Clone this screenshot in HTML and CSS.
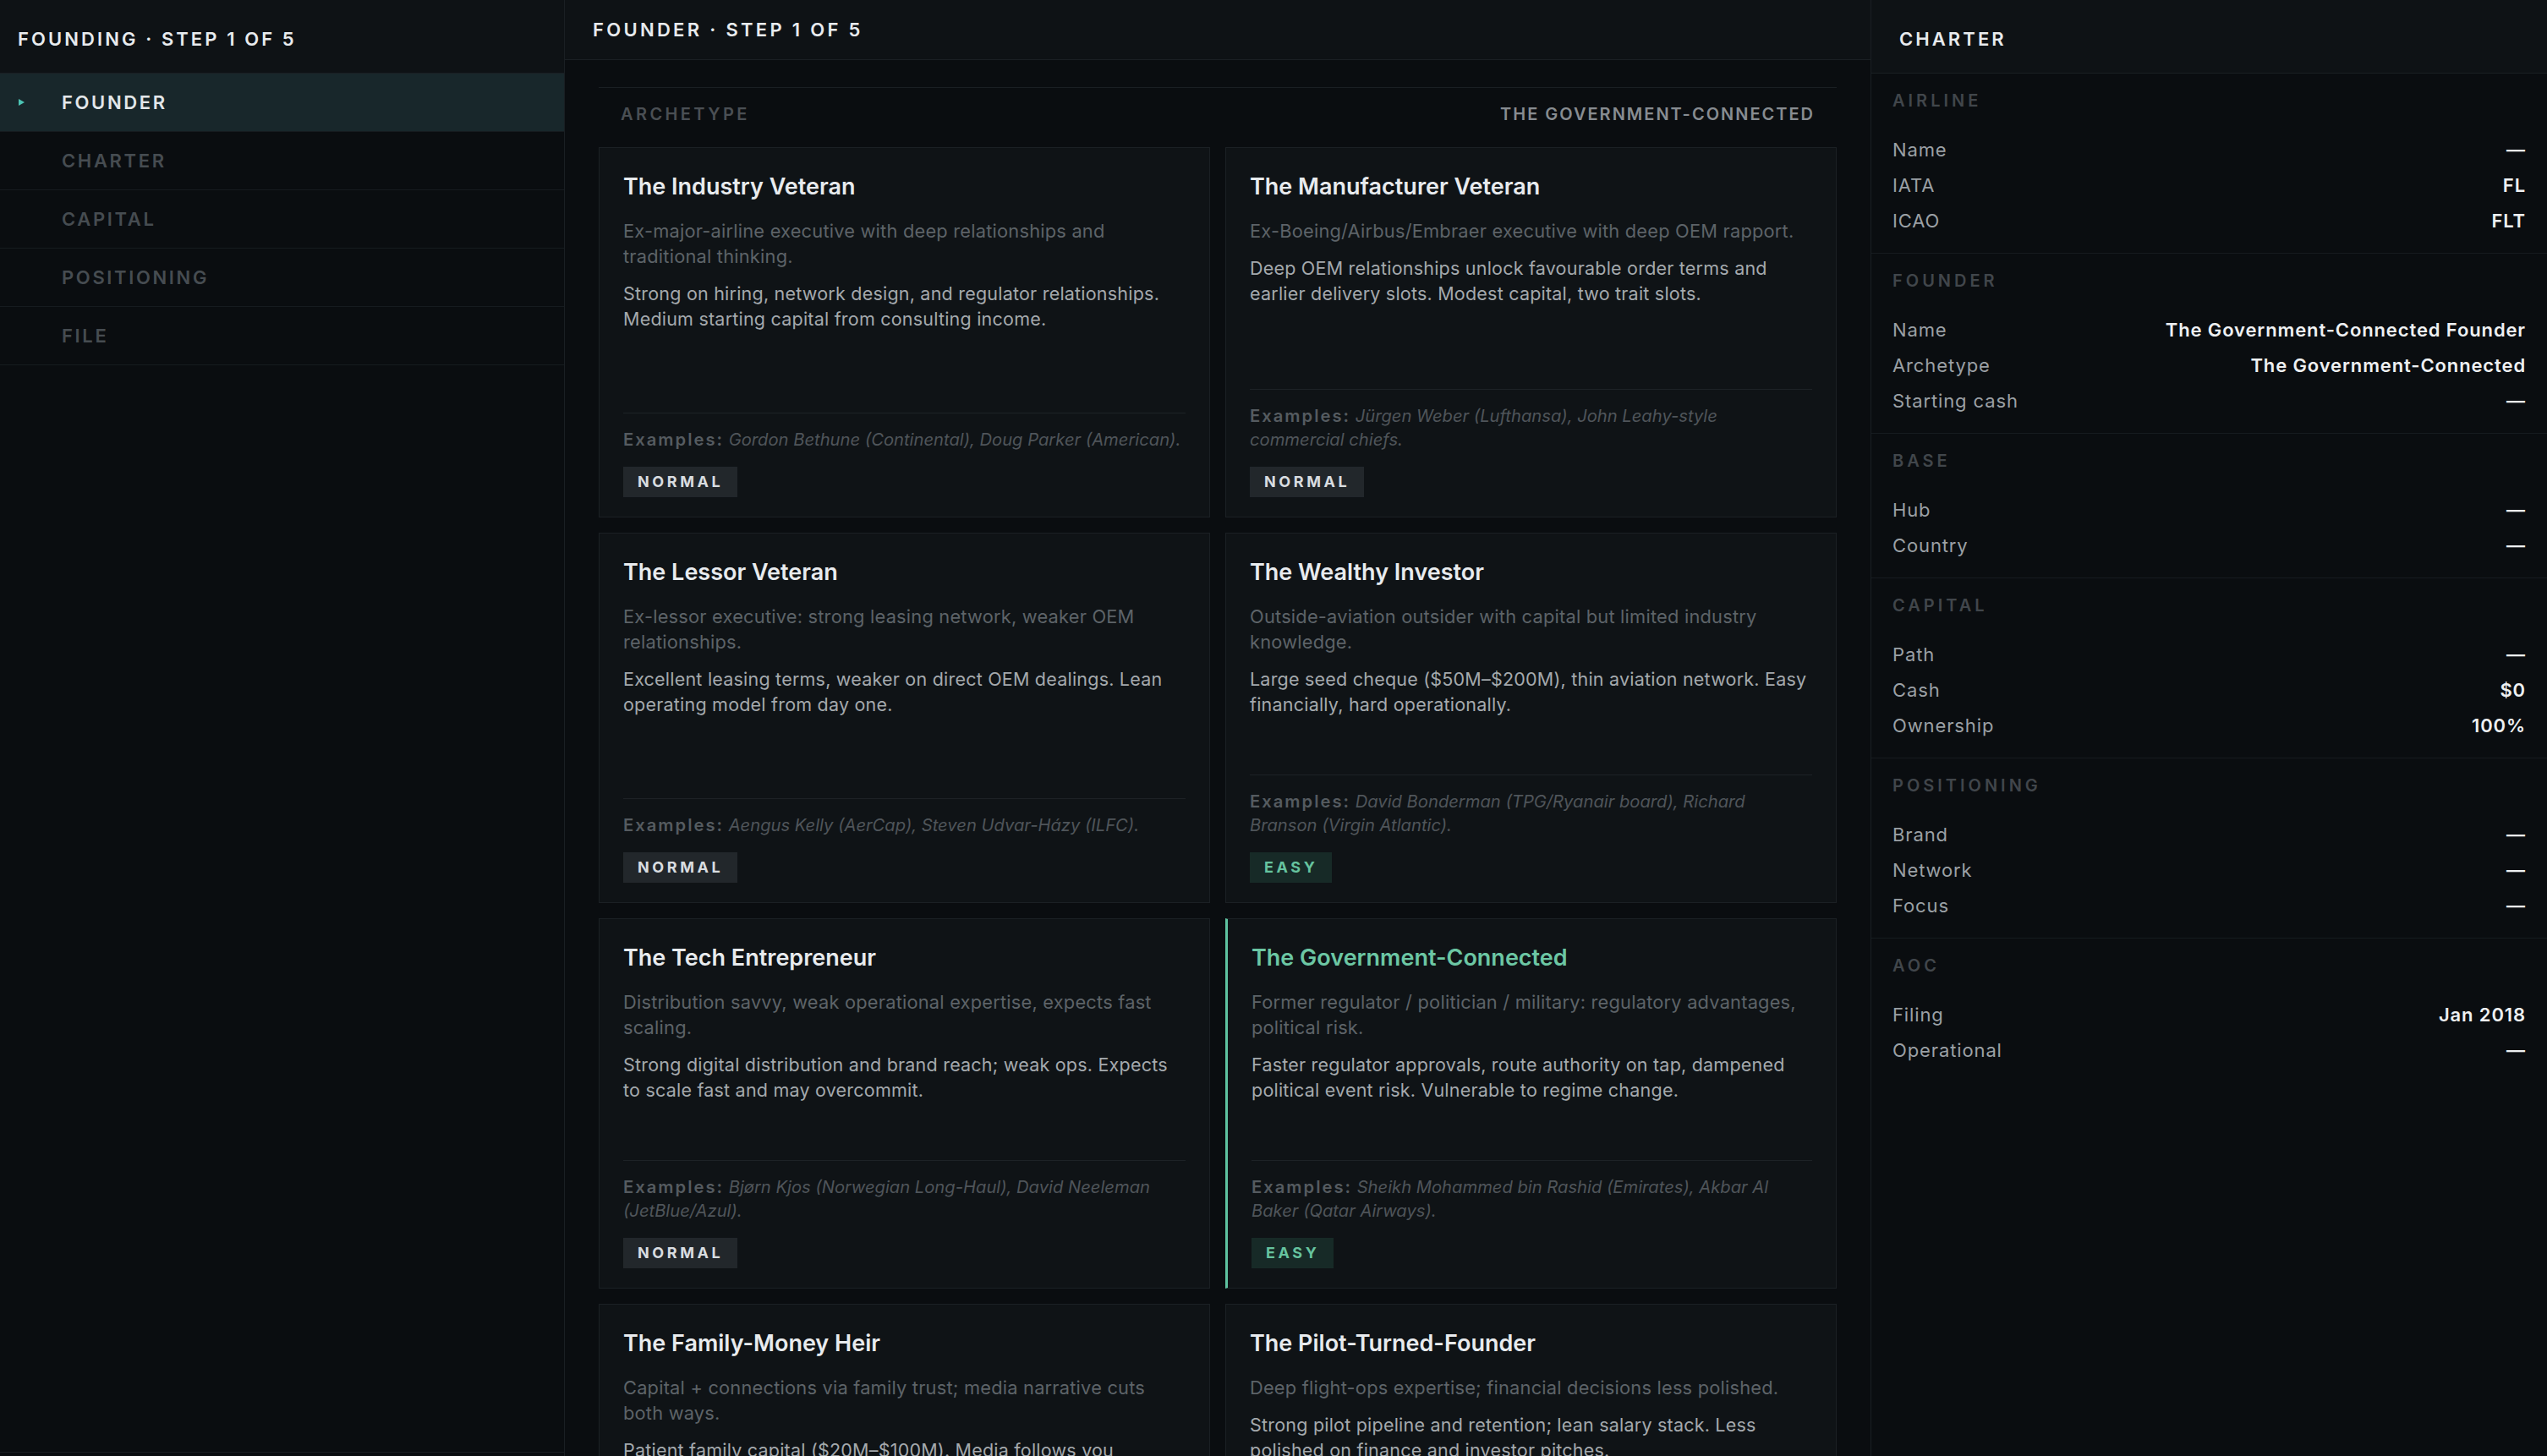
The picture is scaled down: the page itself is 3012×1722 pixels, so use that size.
FILE: index.html
```html
<!DOCTYPE html>
<html lang="en">
<head>
<meta charset="utf-8">
<title>Founding · Step 1 of 5</title>
<link rel="stylesheet" href="styles.css">
</head>
<body>
<div class="app">
  <aside class="steps">
    <div class="steps-head">FOUNDING · STEP 1 OF 5</div>
    <nav class="step-list">
      <div class="step active"><span class="caret"></span><span class="step-name">FOUNDER</span></div>
      <div class="step"><span class="caret"></span><span class="step-name">CHARTER</span></div>
      <div class="step"><span class="caret"></span><span class="step-name">CAPITAL</span></div>
      <div class="step"><span class="caret"></span><span class="step-name">POSITIONING</span></div>
      <div class="step"><span class="caret"></span><span class="step-name">FILE</span></div>
    </nav>
    <div class="steps-foot"></div>
  </aside>

  <main class="main">
    <div class="main-head">FOUNDER · STEP 1 OF 5</div>
    <div class="main-body">
      <div class="section-head">
        <span class="section-label">ARCHETYPE</span>
        <span class="section-value">THE GOVERNMENT-CONNECTED</span>
      </div>
      <div class="cards">
        <div class="card">
          <div class="card-title">The Industry Veteran</div>
          <div class="card-sub">Ex-major-airline executive with deep relationships and traditional thinking.</div>
          <div class="card-body">Strong on hiring, network design, and regulator relationships. Medium starting capital from consulting income.</div>
          <div class="card-foot">
            <div class="examples"><span class="ex-label">Examples:</span> <em>Gordon Bethune (Continental), Doug Parker (American).</em></div>
            <span class="badge">NORMAL</span>
          </div>
        </div>
        <div class="card">
          <div class="card-title">The Manufacturer Veteran</div>
          <div class="card-sub">Ex-Boeing/Airbus/Embraer executive with deep OEM rapport.</div>
          <div class="card-body">Deep OEM relationships unlock favourable order terms and earlier delivery slots. Modest capital, two trait slots.</div>
          <div class="card-foot">
            <div class="examples"><span class="ex-label">Examples:</span> <em>Jürgen Weber (Lufthansa), John Leahy-style commercial chiefs.</em></div>
            <span class="badge">NORMAL</span>
          </div>
        </div>
        <div class="card">
          <div class="card-title">The Lessor Veteran</div>
          <div class="card-sub">Ex-lessor executive: strong leasing network, weaker OEM relationships.</div>
          <div class="card-body">Excellent leasing terms, weaker on direct OEM dealings. Lean operating model from day one.</div>
          <div class="card-foot">
            <div class="examples"><span class="ex-label">Examples:</span> <em>Aengus Kelly (AerCap), Steven Udvar-Házy (ILFC).</em></div>
            <span class="badge">NORMAL</span>
          </div>
        </div>
        <div class="card">
          <div class="card-title">The Wealthy Investor</div>
          <div class="card-sub">Outside-aviation outsider with capital but limited industry knowledge.</div>
          <div class="card-body">Large seed cheque ($50M–$200M), thin aviation network. Easy financially, hard operationally.</div>
          <div class="card-foot">
            <div class="examples"><span class="ex-label">Examples:</span> <em>David Bonderman (TPG/Ryanair board), Richard Branson (Virgin Atlantic).</em></div>
            <span class="badge easy">EASY</span>
          </div>
        </div>
        <div class="card">
          <div class="card-title">The Tech Entrepreneur</div>
          <div class="card-sub">Distribution savvy, weak operational expertise, expects fast scaling.</div>
          <div class="card-body">Strong digital distribution and brand reach; weak ops. Expects to scale fast and may overcommit.</div>
          <div class="card-foot">
            <div class="examples"><span class="ex-label">Examples:</span> <em>Bjørn Kjos (Norwegian Long-Haul), David Neeleman (JetBlue/Azul).</em></div>
            <span class="badge">NORMAL</span>
          </div>
        </div>
        <div class="card selected">
          <div class="card-title">The Government-Connected</div>
          <div class="card-sub">Former regulator / politician / military: regulatory advantages, political risk.</div>
          <div class="card-body">Faster regulator approvals, route authority on tap, dampened political event risk. Vulnerable to regime change.</div>
          <div class="card-foot">
            <div class="examples"><span class="ex-label">Examples:</span> <em>Sheikh Mohammed bin Rashid (Emirates), Akbar Al Baker (Qatar Airways).</em></div>
            <span class="badge easy">EASY</span>
          </div>
        </div>
        <div class="card">
          <div class="card-title">The Family-Money Heir</div>
          <div class="card-sub">Capital + connections via family trust; media narrative cuts both ways.</div>
          <div class="card-body">Patient family capital ($20M–$100M). Media follows you everywhere; scandals hit the brand harder.</div>
          <div class="card-foot">
            <div class="examples"><span class="ex-label">Examples:</span> <em>Family-office founders and heirs.</em></div>
            <span class="badge">NORMAL</span>
          </div>
        </div>
        <div class="card">
          <div class="card-title">The Pilot-Turned-Founder</div>
          <div class="card-sub">Deep flight-ops expertise; financial decisions less polished.</div>
          <div class="card-body">Strong pilot pipeline and retention; lean salary stack. Less polished on finance and investor pitches.</div>
          <div class="card-foot">
            <div class="examples"><span class="ex-label">Examples:</span> <em>Captain-founders of regional start-ups.</em></div>
            <span class="badge">NORMAL</span>
          </div>
        </div>
      </div>
    </div>
  </main>

  <aside class="charter">
    <div class="charter-head">CHARTER</div>
    <section class="csec">
      <div class="csec-label">AIRLINE</div>
      <div class="crow"><span>Name</span><b>—</b></div>
      <div class="crow"><span>IATA</span><b>FL</b></div>
      <div class="crow"><span>ICAO</span><b>FLT</b></div>
    </section>
    <section class="csec">
      <div class="csec-label">FOUNDER</div>
      <div class="crow"><span>Name</span><b>The Government-Connected Founder</b></div>
      <div class="crow"><span>Archetype</span><b>The Government-Connected</b></div>
      <div class="crow"><span>Starting cash</span><b>—</b></div>
    </section>
    <section class="csec">
      <div class="csec-label">BASE</div>
      <div class="crow"><span>Hub</span><b>—</b></div>
      <div class="crow"><span>Country</span><b>—</b></div>
    </section>
    <section class="csec">
      <div class="csec-label">CAPITAL</div>
      <div class="crow"><span>Path</span><b>—</b></div>
      <div class="crow"><span>Cash</span><b>$0</b></div>
      <div class="crow"><span>Ownership</span><b>100%</b></div>
    </section>
    <section class="csec">
      <div class="csec-label">POSITIONING</div>
      <div class="crow"><span>Brand</span><b>—</b></div>
      <div class="crow"><span>Network</span><b>—</b></div>
      <div class="crow"><span>Focus</span><b>—</b></div>
    </section>
    <section class="csec last">
      <div class="csec-label">AOC</div>
      <div class="crow"><span>Filing</span><b>Jan 2018</b></div>
      <div class="crow"><span>Operational</span><b>—</b></div>
    </section>
  </aside>
</div>
</body>
</html>
```
FILE: styles.css
```css
* { box-sizing: border-box; }
html, body { margin: 0; padding: 0; }
body {
  background: #0a0d10;
  color: #e8ebee;
  font-family: Inter, "Noto Sans", "Liberation Sans", sans-serif;
  height: 1722px;
  overflow: hidden;
}
.app {
  display: grid;
  grid-template-columns: 668px 1fr 800px;
  height: 100vh;
}

/* left steps */
.steps {
  display: flex;
  flex-direction: column;
  background: #0a0d10;
  border-right: 1px solid #1a1f23;
  min-height: 0;
}
.steps-head {
  height: 87px;
  flex: none;
  display: flex;
  align-items: center;
  padding: 6px 21px 0;
  background: #0e1215;
  border-bottom: 1px solid #1a1f23;
  font-size: 22px;
  font-weight: 600;
  letter-spacing: 0.14em;
  color: #e8ebee;
}
.step-list { display: flex; flex-direction: column; }
.step {
  height: 69px;
  display: flex;
  align-items: center;
  border-bottom: 1px solid #161b1f;
  font-size: 22px;
  font-weight: 600;
  letter-spacing: 0.12em;
  color: #464c51;
}
.step .caret {
  flex: none;
  width: 73px;
  padding-left: 22px;
  display: flex;
  align-items: center;
}
.step.active { background: #18272b; color: #e3e7ea; }
.step.active .caret::before {
  content: "";
  display: block;
  width: 0;
  height: 0;
  border-top: 4px solid transparent;
  border-bottom: 4px solid transparent;
  border-left: 7px solid #4cc4b4;
}
.steps-foot {
  margin-top: auto;
  height: 5px;
  border-top: 1px solid #1a1f23;
}

/* main */
.main {
  display: flex;
  flex-direction: column;
  min-height: 0;
  overflow: hidden;
  background: #0a0d10;
}
.main-head {
  height: 71px;
  flex: none;
  display: flex;
  align-items: center;
  padding: 0 33px;
  background: #0e1215;
  border-bottom: 1px solid #1a1f23;
  font-size: 22px;
  font-weight: 600;
  letter-spacing: 0.15em;
  color: #e8ebee;
}
.main-body {
  padding: 32px 40px;
  flex: 1;
  min-height: 0;
  overflow: hidden;
}
.section-head {
  display: flex;
  justify-content: space-between;
  border-top: 1px solid #1a1f23;
  padding: 19px 26px 27px;
  font-size: 20px;
  line-height: 24px;
  font-weight: 600;
}
.section-label { color: #4a4f54; letter-spacing: 0.17em; }
.section-value { color: #878c91; letter-spacing: 0.1em; }

.cards {
  display: grid;
  grid-template-columns: 1fr 1fr;
  gap: 18px;
}
.card {
  min-height: 438px;
  display: flex;
  flex-direction: column;
  background: #0f1316;
  border: 1px solid #1b2024;
  padding: 31px 28px 23px;
}
.card.selected { border-left: 3px solid #5ec2a0; }
.card-title {
  font-size: 27px;
  line-height: 30px;
  font-weight: 600;
  color: #e8ebee;
  margin-bottom: 22px;
}
.card.selected .card-title { color: #6cc7a4; }
.card-sub {
  font-size: 21.8px;
  line-height: 30px;
  letter-spacing: 0.01em;
  color: #5d6368;
  margin-bottom: 14px;
}
.card-body {
  font-size: 21.5px;
  line-height: 30px;
  letter-spacing: 0.01em;
  color: #a4a9ad;
}
.card-foot {
  margin-top: auto;
  border-top: 1px solid #1d2226;
  padding-top: 17px;
}
.examples {
  font-size: 20.2px;
  line-height: 28px;
  color: #4f555a;
}
.ex-label {
  font-weight: 600;
  letter-spacing: 0.1em;
  color: #555b60;
}
.examples em { font-style: italic; }
.badge {
  display: inline-block;
  margin-top: 18px;
  height: 36px;
  line-height: 36px;
  padding: 0 17px;
  background: #22272b;
  color: #d9dde0;
  font-size: 18px;
  font-weight: 700;
  letter-spacing: 0.2em;
}
.badge.easy { background: #172a27; color: #66c39f; }

/* right charter */
.charter {
  background: #0a0d10;
  border-left: 1px solid #1a1f23;
  min-height: 0;
  overflow: hidden;
}
.charter-head {
  height: 87px;
  display: flex;
  align-items: center;
  padding: 6px 33px 0;
  background: #0e1215;
  border-bottom: 1px solid #1a1f23;
  font-size: 22px;
  font-weight: 600;
  letter-spacing: 0.14em;
  color: #e8ebee;
}
.csec {
  padding: 20px 25px 17px;
  border-bottom: 1px solid #161b1f;
}
.csec.last { border-bottom: none; }
.csec-label {
  font-size: 20px;
  line-height: 24px;
  font-weight: 600;
  letter-spacing: 0.2em;
  color: #41464b;
  margin-bottom: 25px;
}
.crow {
  height: 42px;
  display: flex;
  align-items: center;
  justify-content: space-between;
  font-size: 22px;
  letter-spacing: 0.04em;
}
.crow span { color: #9ba0a5; }
.crow b { font-weight: 600; color: #eef0f2; }
```
